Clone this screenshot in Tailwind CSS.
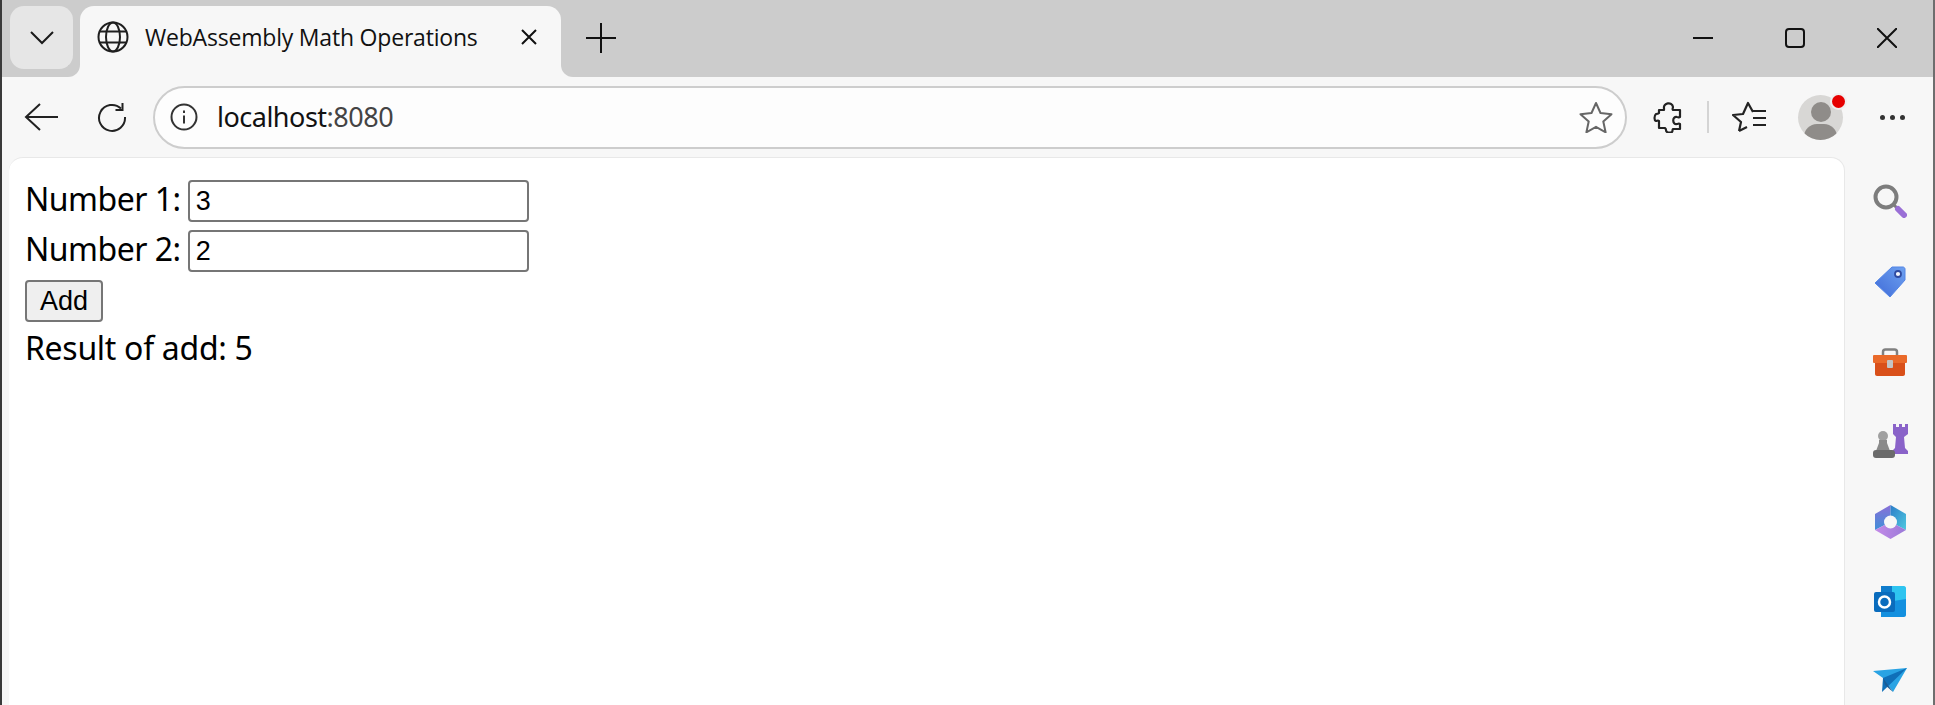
<!DOCTYPE html>
<html lang="en">

<head>
    <meta charset="UTF-8" />
    <title>WebAssembly Math Operations</title>
    <script src="https://cdn.jsdelivr.net/npm/@tailwindcss/browser@4"></script>
</head>

<body class="bg-[#f7f7f7] font-['Noto_Sans',sans-serif] text-black overflow-hidden">
    <div class="h-[705px] flex flex-col border-l-2 border-l-[#3a3a3a] border-r-2 border-r-[#6e6e6e]">

        <!-- tab strip -->
        <div class="h-[77px] shrink-0 bg-[#cccccc] flex pt-[6px] pl-[8px]">
            <div class="w-[63px] h-[63px] rounded-[14px] bg-[#e6e6e6] flex items-center justify-center">
                <svg width="26" height="16" viewBox="0 0 26 16" fill="none" stroke="#1a1a1a" stroke-width="2"><path d="M2 2l11 11L24 2" /></svg>
            </div>
            <div class="relative ml-[7px] w-[481px] h-[71px] rounded-t-[14px] bg-[#f7f7f7] flex items-center pl-[17px]">
                <div class="absolute -left-[12px] bottom-0 w-[12px] h-[12px] bg-[#f7f7f7]"><div class="w-full h-full rounded-br-[12px] bg-[#cccccc]"></div></div>
                <div class="absolute -right-[12px] bottom-0 w-[12px] h-[12px] bg-[#f7f7f7]"><div class="w-full h-full rounded-bl-[12px] bg-[#cccccc]"></div></div>
                <svg class="-mt-[9px]" width="32" height="32" viewBox="0 0 32 32" fill="none" stroke="#1f1f1f" stroke-width="2">
                    <circle cx="16" cy="16" r="14.5" />
                    <ellipse cx="16" cy="16" rx="7" ry="14.5" />
                    <path d="M3 10.5h26M3 21.5h26" />
                </svg>
                <span class="ml-[16px] -mt-[9px] w-[334px] text-[23px] leading-[30px] whitespace-nowrap text-[#111] font-['Open_Sans',sans-serif] tracking-[-0.2px]">WebAssembly Math Operations</span>
                <svg class="ml-[41px] -mt-[9px]" width="18" height="18" viewBox="0 0 18 18" fill="none" stroke="#111" stroke-width="2"><path d="M2 2l14 14M16 2L2 16" /></svg>
            </div>
            <div class="ml-[24px] -mt-[6px] flex items-center h-[75px]">
                <svg width="32" height="32" viewBox="0 0 32 32" fill="none" stroke="#111" stroke-width="2"><path d="M16 1v30M1 16h30" /></svg>
            </div>
            <div class="ml-auto -mt-[6px] h-[76px] flex items-center gap-[72px] pr-[36px]">
                <svg width="20" height="20" viewBox="0 0 20 20" fill="none" stroke="#111" stroke-width="2"><path d="M0 10h20" /></svg>
                <svg width="20" height="20" viewBox="0 0 20 20" fill="none" stroke="#111" stroke-width="2"><rect x="1" y="1" width="18" height="18" rx="3" /></svg>
                <svg width="20" height="20" viewBox="0 0 20 20" fill="none" stroke="#111" stroke-width="2"><path d="M0 0l20 20M20 0L0 20" /></svg>
            </div>
        </div>

        <!-- toolbar -->
        <div class="h-[80px] shrink-0 flex items-center pl-[22px] relative">
            <svg width="34" height="30" viewBox="0 0 34 30" fill="none" stroke="#222" stroke-width="2"><path d="M16 2L2 15l14 13M2 15h32" /></svg>
            <svg class="ml-[39px]" width="30" height="30" viewBox="0 0 30 30" fill="none" stroke="#222" stroke-width="2"><path d="M24 6.5A13 13 0 1 0 28 15" /><path d="M25.5 1v7h-7" /></svg>
            <div class="ml-[26px] w-[1474px] h-[63px] rounded-full border-2 border-[#cdcdcd] bg-[#fdfdfd] flex items-center pl-[15px] pr-[12px]">
                <svg width="28" height="28" viewBox="0 0 28 28" fill="none" stroke="#333" stroke-width="2"><circle cx="14" cy="14" r="12.5" /><path d="M14 12.5v8M14 7.5v2.5" /></svg>
                <span class="ml-[19px] text-[27px] leading-[34px] tracking-[-0.5px]"><span class="text-[#111]">localhost</span><span class="text-[#444]">:8080</span></span>
                <svg class="ml-auto" width="34" height="32" viewBox="0 0 34 32" fill="none" stroke="#666" stroke-width="2" stroke-linejoin="round"><path d="M17 2l4.500 10 11 1.200-8.200 7.300 2.300 10.800L17 25.800 7.400 31.300l2.300-10.800L1.500 13.200l11-1.200z" /></svg>
            </div>
            <svg class="ml-[26px]" width="30" height="32" viewBox="0 0 30 32" fill="none" stroke="#222" stroke-width="2.200" stroke-linejoin="round"><path d="M11 7c-1-5 8-7 9-1 0 1-1 2 0 3h7v7c-1 1-2 0-3 0-5-1-5 8 0 7 1 0 2-1 3 0v5h-7c-1 1 0 2-1 3-2 1-6 1-6-2 0-1 0-1-1-2H6v-7c-1-1-2 0-3 0-2-1-2-5 0-7 1 0 2 0 3-1V9h5z" /></svg>
            <div class="ml-[24px] w-[2px] h-[32px] bg-[#d4d4d4]"></div>
            <svg class="ml-[23px]" width="34" height="32" viewBox="0 0 34 32" fill="none" stroke="#222" stroke-width="2.200" stroke-linejoin="round"><path d="M7 30l2-9-8-7 10-1 5-11 5 9M7 30l8-4" /><path d="M21 10h13M21 17h13M21 24h13" /></svg>
            <div class="relative ml-[32px] w-[45px] h-[45px] rounded-full bg-[#d8d7d5] overflow-hidden">
                <div class="mx-auto mt-[7px] w-[20px] h-[20px] rounded-full bg-[#8f8c89]"></div>
                <div class="absolute left-[6px] bottom-[-10px] w-[33px] h-[26px] rounded-full bg-[#8f8c89]"></div>
            </div>
            <div class="absolute left-[1830px] top-[18px] w-[13px] h-[13px] rounded-full bg-[#e60000] ring-2 ring-[#f0f0f0]"></div>
            <div class="ml-[37px] flex gap-[5px]">
                <div class="w-[5px] h-[5px] rounded-full bg-[#333]"></div>
                <div class="w-[5px] h-[5px] rounded-full bg-[#333]"></div>
                <div class="w-[5px] h-[5px] rounded-full bg-[#333]"></div>
            </div>
        </div>

        <!-- page and sidebar -->
        <div class="flex-1 flex min-h-0 pl-[7px]">
            <div class="w-[1836px] shrink-0 bg-white rounded-tl-[14px] rounded-tr-[14px] border-t border-r border-[#e8e8e8] pl-[16px] pt-[18px] text-[32px] leading-[50px]">
                <div class="flex items-center h-[50px]">
                    <label class="-mt-[5px] tracking-[-0.5px]">Number 1:</label>
                    <input value="3" class="ml-[7px] w-[341px] h-[42px] rounded-[4px] border-2 border-[#767676] bg-white px-[6px] text-[27px] leading-none font-['Liberation_Sans',sans-serif]" />
                </div>
                <div class="flex items-center h-[50px]">
                    <label class="-mt-[5px] tracking-[-0.5px]">Number 2:</label>
                    <input value="2" class="ml-[7px] w-[341px] h-[42px] rounded-[4px] border-2 border-[#767676] bg-white px-[6px] text-[27px] leading-none font-['Liberation_Sans',sans-serif]" />
                </div>
                <div class="flex items-center h-[50px]">
                    <button class="w-[78px] h-[42px] rounded-[4px] border-2 border-[#767676] bg-[#efefef] text-[27px] leading-none font-['Liberation_Sans',sans-serif]">Add</button>
                </div>
                <div class="-mt-[3px] h-[50px] tracking-[-0.3px]">Result of add: 5</div>
            </div>

            <div class="flex-1 flex flex-col items-center pt-[3px] pl-[2px]">
                <div class="h-[81px] shrink-0 flex items-center">
                    <svg width="34" height="34" viewBox="0 0 34 34" fill="none"><circle cx="13" cy="13" r="10.500" stroke="#7d7d7d" stroke-width="4" /><path d="M21 21l3 3" stroke="#7d7d7d" stroke-width="3" /><path d="M25 25l6 6" stroke="#9a6fd6" stroke-width="6" stroke-linecap="round" /></svg>
                </div>
                <div class="h-[81px] shrink-0 flex items-center">
                    <svg width="32" height="32" viewBox="0 0 32 32">
                        <defs><linearGradient id="tag" x1="1" y1="0" x2="0" y2="1"><stop offset="0" stop-color="#6ea1f0" /><stop offset="1" stop-color="#3f6bd8" /></linearGradient></defs>
                        <path d="M18 1h11c1 0 2 1 2 2v11L16 31 1 17z" fill="url(#tag)" stroke="#5285e6" stroke-linejoin="round" /><circle cx="24" cy="8" r="3" fill="#f4f6fc" stroke="#2f4aa0" stroke-width="1.800" />
                    </svg>
                </div>
                <div class="h-[81px] shrink-0 flex items-center">
                    <svg width="36" height="30" viewBox="0 0 36 30"><path d="M11 8V4c0-1.500 1-2.500 2.500-2.500h9C24 1.500 25 2.500 25 4v4" fill="none" stroke="#808080" stroke-width="2.500" /><path d="M3 14h30v12c0 1-1 2-2 2H5c-1 0-2-1-2-2z" fill="#d9501a" /><rect x="1" y="7" width="34" height="8" rx="1" fill="#ea6a2a" /><rect x="15" y="12" width="6" height="8" rx="1" fill="#c4c4c4" /></svg>
                </div>
                <div class="h-[81px] shrink-0 flex items-center -mt-[3px]">
                    <svg width="36" height="36" viewBox="0 0 36 36"><path d="M21 1h3v3h3V1h3v3h3V1h3v10l-4 3 1 11 3 3v3H20v-3l3-3 1-11-3-3z" fill="#8a63c9" /><circle cx="11" cy="13" r="5" fill="#a0a0a0" /><path d="M7 17h8v3l3 8H4l3-8z" fill="#8a8a8a" /><rect x="1" y="27" width="22" height="8" rx="3" fill="#6b6b6b" /></svg>
                </div>
                <div class="h-[81px] shrink-0 flex items-center">
                    <svg width="33" height="36" viewBox="0 0 33 36">
                        <defs>
                            <linearGradient id="cop1" x1="0" y1="0" x2="0" y2="1"><stop offset="0" stop-color="#8a6fd8" /><stop offset="1" stop-color="#3f8fd8" /></linearGradient>
                            <linearGradient id="cop2" x1="0" y1="0" x2="1" y2="1"><stop offset="0" stop-color="#2b7cc8" /><stop offset="1" stop-color="#4fc8e0" /></linearGradient>
                            <linearGradient id="cop3" x1="0" y1="0" x2="1" y2="0"><stop offset="0" stop-color="#c48ae8" /><stop offset="1" stop-color="#9a7ad8" /></linearGradient>
                        </defs>
                        <path d="M16.500 1L1 10v16l15.500-8z" fill="url(#cop1)" />
                        <path d="M16.500 1L32 10v16L16.500 18z" fill="url(#cop2)" />
                        <path d="M1 26l15.500 9L32 26l-15.500-8z" fill="url(#cop3)" />
                        <circle cx="16.500" cy="18" r="6.500" fill="#f7f7f7" />
                    </svg>
                </div>
                <div class="h-[80px] shrink-0 flex items-center -mt-[1px]">
                    <svg width="32" height="32" viewBox="0 0 32 32"><path d="M7 1h23c1 0 2 1 2 2v13H7z" fill="#2ec4f0" /><path d="M7 1h11v15H7z" fill="#0f7ccc" /><path d="M32 14v16c0 1-1 2-2 2H7V18z" fill="#1490df" /><rect x="0" y="7" width="21" height="20" rx="2" fill="#0a6cbd" /><circle cx="10.500" cy="17" r="5.500" fill="none" stroke="#fff" stroke-width="2.500" /></svg>
                </div>
                <div class="h-[80px] shrink-0 flex items-center">
                    <svg width="34" height="26" viewBox="0 0 34 26"><path d="M0 3l34-3-14 24-10-14z" fill="#29a3e4" /><path d="M34 0L10 10 9 24z" fill="#0f6fb8" /><path d="M10 10l2 7 8 7z" fill="#1a5c96" /></svg>
                </div>
            </div>
        </div>
    </div>
</body>

</html>
